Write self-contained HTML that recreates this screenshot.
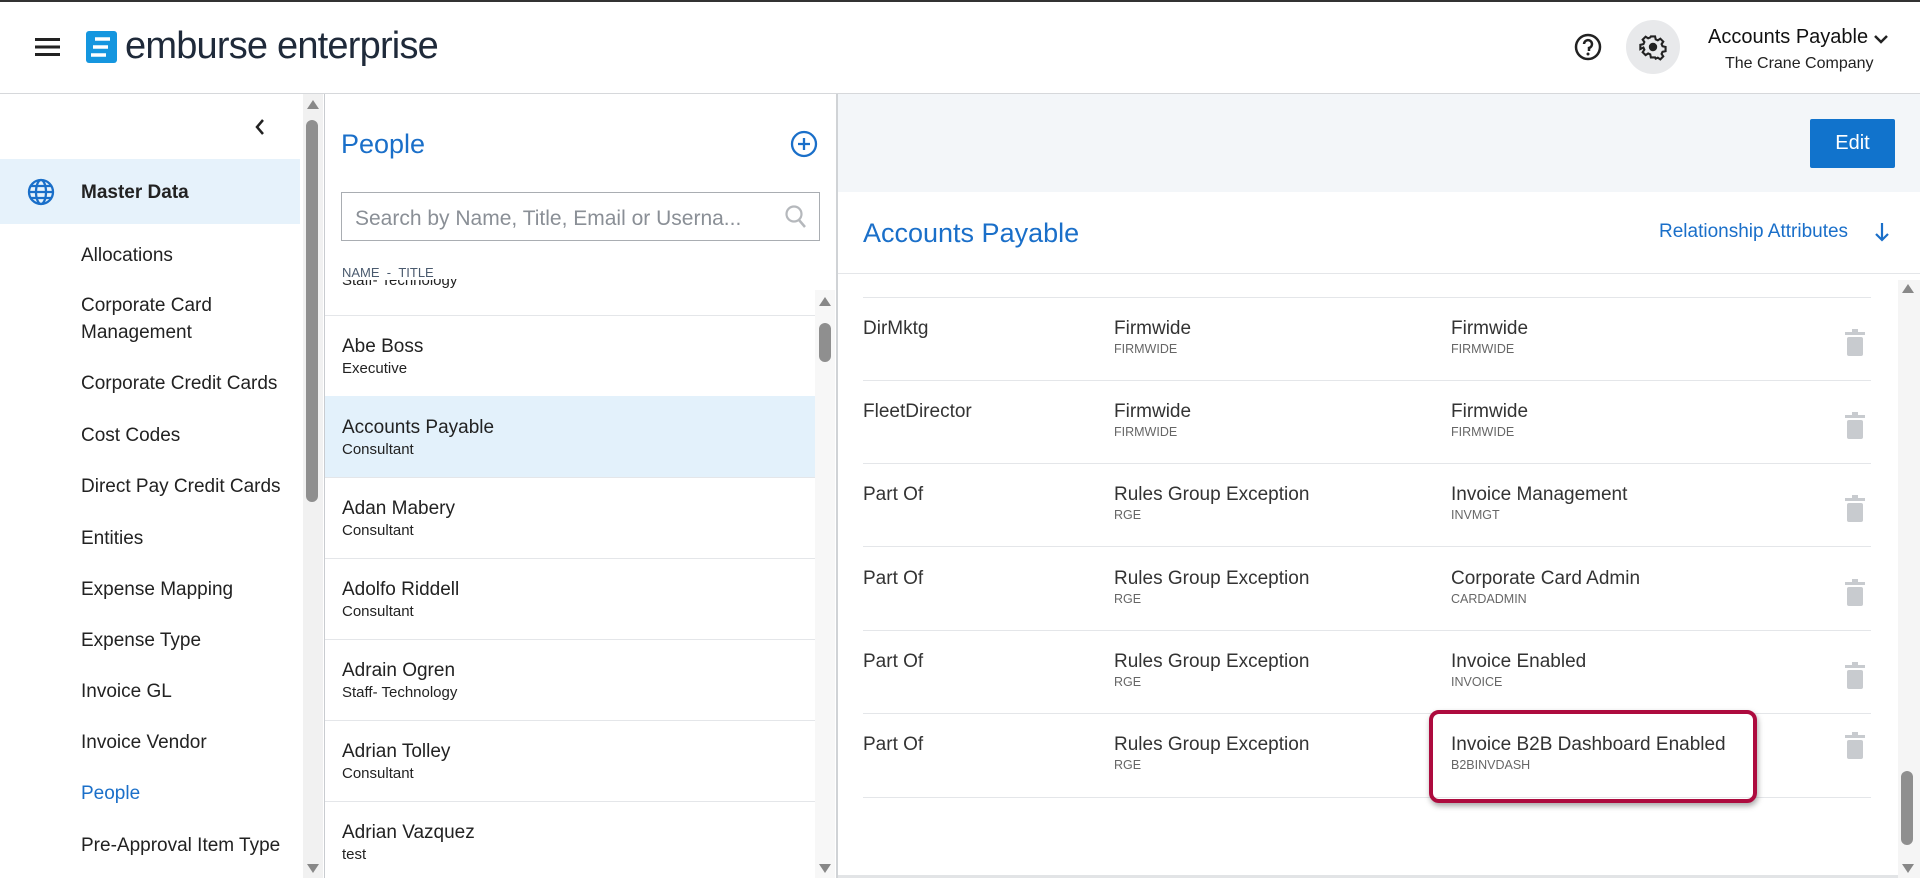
<!DOCTYPE html>
<html><head><meta charset="utf-8"><style>
*{margin:0;padding:0;box-sizing:border-box}
body{width:1920px;height:878px;overflow:hidden;background:#fff;font-family:"Liberation Sans",Arial,sans-serif;color:#222;position:relative}
.a{position:absolute;white-space:nowrap}
.nav{left:81px;font-size:19px;color:#222}
.nm{left:342px;font-size:19px;color:#222}
.tt{left:342px;font-size:15px;color:#222}
.sep{position:absolute;height:1px;background:#e4e6e9}
.c1{font-size:19px;color:#333}
.sub{font-size:12.5px;color:#666}
</style></head><body>
<div class="a" style="left:0;top:0;width:1920px;height:2px;background:#333"></div>
<!-- header -->
<svg class="a" style="left:35px;top:37px" width="26" height="20"><rect y="1" width="25" height="3" fill="#222"/><rect y="8.5" width="25" height="3" fill="#222"/><rect y="16" width="25" height="3" fill="#222"/></svg>
<svg class="a" style="left:86px;top:31px" width="31" height="32"><rect width="31" height="32" rx="3" fill="#1596df"/><path d="M9 8h15M7 16h15M5 24h15" stroke="#fff" stroke-width="3.5"/></svg>
<div class="a" style="left:125px;top:25px;font-size:38px;color:#1f2a3a;letter-spacing:-0.8px">emburse enterprise</div>
<div class="sep" style="left:0;top:93px;width:1920px;background:#d6d8db"></div>
<svg class="a" style="left:1573px;top:32px" width="30" height="30"><circle cx="15" cy="15" r="12" fill="none" stroke="#222" stroke-width="2.5"/><path d="M11 12a4 4 0 1 1 5 4v3" fill="none" stroke="#222" stroke-width="2.5"/><circle cx="15" cy="22" r="1.5" fill="#222"/></svg>
<div class="a" style="left:1626px;top:20px;width:54px;height:54px;border-radius:50%;background:#e8e9eb"></div>
<svg class="a" style="left:1639px;top:33px" width="28" height="28" viewBox="0 0 24 24"><path d="M10 2h4l.6 2.8 2 .9 2.4-1.6 2.8 2.8-1.6 2.4.9 2 2.9.7v4l-2.9.6-.9 2 1.6 2.4-2.8 2.8-2.4-1.6-2 .9L14 22h-4l-.6-2.9-2-.9-2.4 1.6-2.8-2.8 1.6-2.4-.9-2L0 14v-4l2.9-.7.9-2L2.2 5l2.8-2.8 2.4 1.6 2-.9z" fill="none" stroke="#222" stroke-width="2" transform="scale(.9) translate(1.3 1.3)"/><circle cx="12" cy="12" r="3.6" fill="#222"/></svg>
<div class="a" style="left:1708px;top:26px;font-size:20px;color:#111">Accounts Payable</div>
<svg class="a" style="left:1873px;top:33px" width="16" height="12"><path d="M2 3l6 6 6-6" fill="none" stroke="#222" stroke-width="2.5"/></svg>
<div class="a" style="left:1725px;top:55px;font-size:16px;color:#222">The Crane Company</div>
<!-- sidebar -->
<svg class="a" style="left:253px;top:118px" width="14" height="18"><path d="M10 2L4 9l6 7" fill="none" stroke="#222" stroke-width="2.5"/></svg>
<div class="a" style="left:0;top:159px;width:300px;height:65px;background:#e6f2fb"></div>
<svg class="a" style="left:26px;top:177px" width="30" height="30" viewBox="0 0 30 30"><g fill="none" stroke="#1a6fc9" stroke-width="2.3"><circle cx="15" cy="15" r="12"/><ellipse cx="15" cy="15" rx="5" ry="12"/><path d="M3 15h24M5 9h20M5 21h20"/></g></svg>
<div class="a" style="left:81px;top:182px;font-size:19px;font-weight:bold;color:#222">Master Data</div>
<div class="a nav" style="top:245px">Allocations</div>
<div class="a nav" style="top:295px">Corporate Card</div>
<div class="a nav" style="top:322px">Management</div>
<div class="a nav" style="top:373px">Corporate Credit Cards</div>
<div class="a nav" style="top:425px">Cost Codes</div>
<div class="a nav" style="top:476px">Direct Pay Credit Cards</div>
<div class="a nav" style="top:528px">Entities</div>
<div class="a nav" style="top:579px">Expense Mapping</div>
<div class="a nav" style="top:630px">Expense Type</div>
<div class="a nav" style="top:681px">Invoice GL</div>
<div class="a nav" style="top:732px">Invoice Vendor</div>
<div class="a nav" style="top:783px;color:#1a6fc9">People</div>
<div class="a nav" style="top:835px">Pre-Approval Item Type</div>
<div class="a" style="left:303px;top:94px;width:20px;height:784px;background:#f1f1f1"></div>
<svg class="a" style="left:305px;top:98px" width="16" height="12"><path d="M8 2l6 9H2z" fill="#888"/></svg>
<div class="a" style="left:306px;top:120px;width:12px;height:382px;border-radius:6px;background:#8f8f8f"></div>
<svg class="a" style="left:305px;top:862px" width="16" height="12"><path d="M2 2h12l-6 9z" fill="#888"/></svg>
<!-- middle -->
<div class="a" style="left:324px;top:94px;width:1px;height:784px;background:#c9ccd0"></div>
<div class="a" style="left:836px;top:94px;width:2px;height:784px;background:#d0d3d6"></div>
<div class="a" style="left:341px;top:129px;font-size:27px;color:#1a6fc9">People</div>
<svg class="a" style="left:790px;top:130px" width="28" height="28"><circle cx="14" cy="14" r="12" fill="none" stroke="#1a6fc9" stroke-width="2.3"/><path d="M14 8v12M8 14h12" stroke="#1a6fc9" stroke-width="2.3"/></svg>
<div class="a" style="left:341px;top:192px;width:479px;height:49px;border:1.5px solid #a9adb2"></div>
<div class="a" style="left:355px;top:207px;font-size:21px;color:#8a8f96">Search by Name, Title, Email or Userna...</div>
<svg class="a" style="left:784px;top:204px" width="24" height="26"><circle cx="10" cy="10" r="7.5" fill="none" stroke="#b5b8bc" stroke-width="2.2"/><path d="M15 16l6 7" stroke="#b5b8bc" stroke-width="2.5"/></svg>
<div class="a" style="left:325px;top:279px;width:490px;height:36px;overflow:hidden"><div style="position:absolute;left:17px;top:-7px;font-size:15px">Staff- Technology</div></div>
<div class="a" style="left:342px;top:265px;font-size:13px;color:#4a5a6e;background:#fff">NAME &nbsp;- &nbsp;TITLE</div>
<div class="sep" style="left:325px;top:315px;width:490px"></div>
<div class="a" style="left:325px;top:396px;width:490px;height:81px;background:#e3f1fb"></div>
<div class="a nm" style="top:336px">Abe Boss</div><div class="a tt" style="top:360px">Executive</div>
<div class="a nm" style="top:417px">Accounts Payable</div><div class="a tt" style="top:441px">Consultant</div>
<div class="sep" style="left:325px;top:477px;width:490px"></div>
<div class="a nm" style="top:498px">Adan Mabery</div><div class="a tt" style="top:522px">Consultant</div>
<div class="sep" style="left:325px;top:558px;width:490px"></div>
<div class="a nm" style="top:579px">Adolfo Riddell</div><div class="a tt" style="top:603px">Consultant</div>
<div class="sep" style="left:325px;top:639px;width:490px"></div>
<div class="a nm" style="top:660px">Adrain Ogren</div><div class="a tt" style="top:684px">Staff- Technology</div>
<div class="sep" style="left:325px;top:720px;width:490px"></div>
<div class="a nm" style="top:741px">Adrian Tolley</div><div class="a tt" style="top:765px">Consultant</div>
<div class="sep" style="left:325px;top:801px;width:490px"></div>
<div class="a nm" style="top:822px">Adrian Vazquez</div><div class="a tt" style="top:846px">test</div>
<div class="a" style="left:815px;top:290px;width:20px;height:588px;background:#f7f7f7"></div>
<svg class="a" style="left:817px;top:295px" width="16" height="12"><path d="M8 2l6 9H2z" fill="#888"/></svg>
<div class="a" style="left:819px;top:323px;width:12px;height:39px;border-radius:6px;background:#8f8f8f"></div>
<svg class="a" style="left:817px;top:862px" width="16" height="12"><path d="M2 2h12l-6 9z" fill="#888"/></svg>
<!-- right -->
<div class="a" style="left:838px;top:94px;width:1082px;height:98px;background:#f3f6f9"></div>
<div class="a" style="left:1810px;top:119px;width:85px;height:49px;background:#1173cc;border-radius:2px;color:#fff;font-size:20px;text-align:center;line-height:49px">Edit</div>
<div class="a" style="left:863px;top:218px;font-size:27px;color:#1a6fc9">Accounts Payable</div>
<div class="a" style="left:1659px;top:221px;font-size:19px;color:#1a6fc9">Relationship Attributes</div>
<svg class="a" style="left:1873px;top:221px" width="18" height="22"><path d="M9 2v17M3 13l6 6 6-6" fill="none" stroke="#1a6fc9" stroke-width="2.2"/></svg>
<div class="sep" style="left:838px;top:273px;width:1082px"></div>
<div class="a" style="left:1898px;top:280px;width:22px;height:598px;background:#f5f5f5"></div>
<svg class="a" style="left:1900px;top:282px" width="16" height="12"><path d="M8 2l6 9H2z" fill="#888"/></svg>
<div class="a" style="left:1901px;top:771px;width:12px;height:74px;border-radius:6px;background:#8f8f8f"></div>
<svg class="a" style="left:1900px;top:862px" width="16" height="12"><path d="M2 2h12l-6 9z" fill="#888"/></svg>

<div class="sep" style="left:863px;top:297px;width:1008px"></div>
<div class="sep" style="left:863px;top:380px;width:1008px"></div>
<div class="sep" style="left:863px;top:463px;width:1008px"></div>
<div class="sep" style="left:863px;top:546px;width:1008px"></div>
<div class="sep" style="left:863px;top:630px;width:1008px"></div>
<div class="sep" style="left:863px;top:713px;width:1008px"></div>
<div class="sep" style="left:863px;top:797px;width:1008px"></div>

<div class="a c1" style="left:863px;top:318px">DirMktg</div>
<div class="a c1" style="left:1114px;top:318px">Firmwide</div><div class="a sub" style="left:1114px;top:342px">FIRMWIDE</div>
<div class="a c1" style="left:1451px;top:318px">Firmwide</div><div class="a sub" style="left:1451px;top:342px">FIRMWIDE</div>

<div class="a c1" style="left:863px;top:401px">FleetDirector</div>
<div class="a c1" style="left:1114px;top:401px">Firmwide</div><div class="a sub" style="left:1114px;top:425px">FIRMWIDE</div>
<div class="a c1" style="left:1451px;top:401px">Firmwide</div><div class="a sub" style="left:1451px;top:425px">FIRMWIDE</div>

<div class="a c1" style="left:863px;top:484px">Part Of</div>
<div class="a c1" style="left:1114px;top:484px">Rules Group Exception</div><div class="a sub" style="left:1114px;top:508px">RGE</div>
<div class="a c1" style="left:1451px;top:484px">Invoice Management</div><div class="a sub" style="left:1451px;top:508px">INVMGT</div>

<div class="a c1" style="left:863px;top:568px">Part Of</div>
<div class="a c1" style="left:1114px;top:568px">Rules Group Exception</div><div class="a sub" style="left:1114px;top:592px">RGE</div>
<div class="a c1" style="left:1451px;top:568px">Corporate Card Admin</div><div class="a sub" style="left:1451px;top:592px">CARDADMIN</div>

<div class="a c1" style="left:863px;top:651px">Part Of</div>
<div class="a c1" style="left:1114px;top:651px">Rules Group Exception</div><div class="a sub" style="left:1114px;top:675px">RGE</div>
<div class="a c1" style="left:1451px;top:651px">Invoice Enabled</div><div class="a sub" style="left:1451px;top:675px">INVOICE</div>

<div class="a c1" style="left:863px;top:734px">Part Of</div>
<div class="a c1" style="left:1114px;top:734px">Rules Group Exception</div><div class="a sub" style="left:1114px;top:758px">RGE</div>
<div class="a c1" style="left:1451px;top:734px">Invoice B2B Dashboard Enabled</div><div class="a sub" style="left:1451px;top:758px">B2BINVDASH</div>

<div class="a" style="left:1429px;top:710px;width:328px;height:93px;border:4px solid #ad0b3e;border-radius:10px;box-shadow:1px 3px 6px rgba(0,0,0,.35)"></div>

<svg class="a" style="left:1845px;top:329px" width="20" height="28"><rect x="0" y="3" width="20" height="3" fill="#c8cbcf"/><rect x="7" y="0" width="6" height="3" fill="#c8cbcf"/><rect x="2" y="8" width="16" height="19" rx="2" fill="#c8cbcf"/></svg>
<svg class="a" style="left:1845px;top:412px" width="20" height="28"><rect x="0" y="3" width="20" height="3" fill="#c8cbcf"/><rect x="7" y="0" width="6" height="3" fill="#c8cbcf"/><rect x="2" y="8" width="16" height="19" rx="2" fill="#c8cbcf"/></svg>
<svg class="a" style="left:1845px;top:495px" width="20" height="28"><rect x="0" y="3" width="20" height="3" fill="#c8cbcf"/><rect x="7" y="0" width="6" height="3" fill="#c8cbcf"/><rect x="2" y="8" width="16" height="19" rx="2" fill="#c8cbcf"/></svg>
<svg class="a" style="left:1845px;top:579px" width="20" height="28"><rect x="0" y="3" width="20" height="3" fill="#c8cbcf"/><rect x="7" y="0" width="6" height="3" fill="#c8cbcf"/><rect x="2" y="8" width="16" height="19" rx="2" fill="#c8cbcf"/></svg>
<svg class="a" style="left:1845px;top:662px" width="20" height="28"><rect x="0" y="3" width="20" height="3" fill="#c8cbcf"/><rect x="7" y="0" width="6" height="3" fill="#c8cbcf"/><rect x="2" y="8" width="16" height="19" rx="2" fill="#c8cbcf"/></svg>
<svg class="a" style="left:1845px;top:732px" width="20" height="28"><rect x="0" y="3" width="20" height="3" fill="#c8cbcf"/><rect x="7" y="0" width="6" height="3" fill="#c8cbcf"/><rect x="2" y="8" width="16" height="19" rx="2" fill="#c8cbcf"/></svg>
<div class="a" style="left:838px;top:875px;width:1060px;height:3px;background:#e2e4e6"></div>
</body></html>
